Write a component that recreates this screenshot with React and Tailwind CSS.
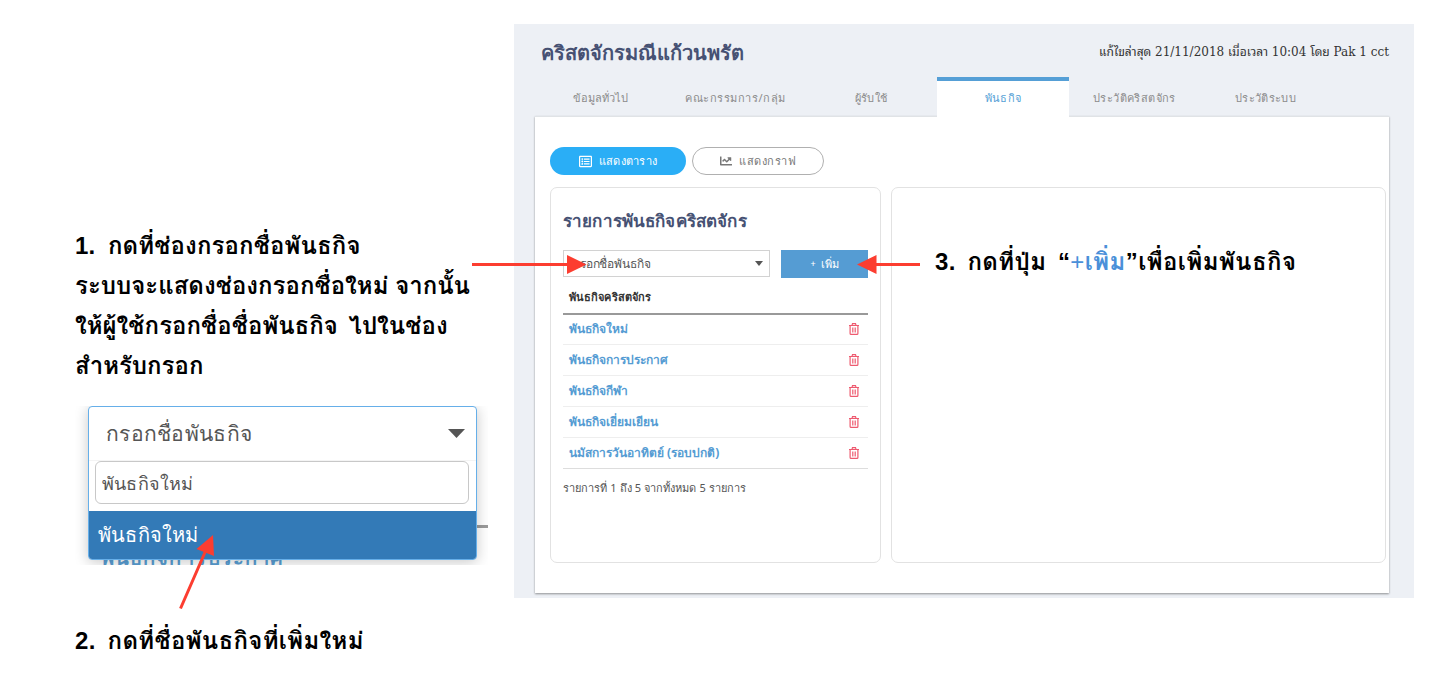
import React from "react";
import { FaRegListAlt, FaChartLine } from "react-icons/fa";

const tabs = [
  { label: "ข้อมูลทั่วไป", cls: "w-[131px] tracking-[0.1px]" },
  { label: "คณะกรรมการ/กลุ่ม", cls: "w-[139px] tracking-[0.5px]" },
  { label: "ผู้รับใช้", cls: "w-[132px] tracking-[0.3px]" },
  { label: "พันธกิจ", active: true, cls: "w-[132px] tracking-[0.4px]" },
  { label: "ประวัติคริสตจักร", cls: "w-[131px] tracking-[0.4px]" },
  { label: "ประวัติระบบ", cls: "w-[131px] tracking-[0.3px]" },
];

const missions = ["พันธกิจใหม่", "พันธกิจการประกาศ", "พันธกิจกีฬา", "พันธกิจเยี่ยมเยียน", "นมัสการวันอาทิตย์ (รอบปกติ)"];

function Caret({ className }) {
  return (
    <svg className={className} viewBox="0 0 16 8" preserveAspectRatio="none" fill="#555">
      <path d="M0 0h16L8 8z" />
    </svg>
  );
}

function Trash() {
  return (
    <svg className="mr-[9px] h-[12px] w-[10px]" viewBox="0 0 10 12" fill="none" stroke="#ee5a6f" strokeWidth="1.2">
      <path d="M0 2.5h10M3 2.4L3.5.7h3L7 2.4M1.1 2.8v7.7q0 .9.9.9h6q.9 0 .9-.9V2.800M3.8 4.500v5M6.200 4.500v5" />
    </svg>
  );
}

function NewMissionDropdown() {
  return (
    <div className="relative ml-[75px] mt-5 h-[159px] w-[413px] overflow-hidden pl-[13px] font-['Noto_Sans',sans-serif] font-normal">
      <div className="absolute inset-x-0 top-[119px] flex h-[3px] justify-end">
        <div className="w-[14px] bg-[#9b9b9b]" />
      </div>
      <div className="absolute left-[26px] top-[139px] text-[20px] font-bold leading-[26px] tracking-[1.1px] text-[#5a9fd4]">
        พันธกิจการประกาศ
      </div>
      <div className="relative h-[154px] w-[389px] rounded-[4px] border-[1.5px] border-[#66afe9] bg-white shadow-[0_2px_14px_rgba(0,0,0,0.22)]">
        <div className="flex h-[54px] items-center justify-between border-b border-[#f4f4f4] pl-[17px] pr-[11px] text-[#555]">
          <span className="text-[21px] leading-none tracking-[0.3px]">กรอกชื่อพันธกิจ</span>
          <Caret className="h-[9px] w-[17px]" />
        </div>
        <div className="ml-[6px] flex h-[43px] w-[374px] items-center rounded-[6px] border-[1.5px] border-[#c8c8c8] pl-[6px] text-[#555]">
          <span className="text-[18px] leading-none tracking-[0.2px]">พันธกิจใหม่</span>
        </div>
        <div className="mt-[7px] flex h-[48px] items-center rounded-b-[3px] bg-[#337ab7] pl-[9px] text-white">
          <span className="text-[20px] font-medium leading-none tracking-[0.2px]">พันธกิจใหม่</span>
        </div>
      </div>
    </div>
  );
}

function Instructions() {
  return (
    <section className="w-[514px] shrink-0 pt-[226px] font-['Liberation_Sans','Loma',sans-serif] text-[24px] font-bold text-black">
      <div className="whitespace-nowrap pl-[75px] leading-[40px]">
        <p className="tracking-[0.1px] [word-spacing:6px]">1. กดที่ช่องกรอกชื่อพันธกิจ</p>
        <p>ระบบจะแสดงช่องกรอกชื่อใหม่ จากนั้น</p>
        <p className="[word-spacing:4px]">ให้ผู้ใช้กรอกชื่อชื่อพันธกิจ ไปในช่อง</p>
        <p>สำหรับกรอก</p>
      </div>
      <NewMissionDropdown />
      <p className="mt-[56px] whitespace-nowrap pl-[75px] leading-[40px] tracking-[0.3px] [word-spacing:5px]">2. กดที่ชื่อพันธกิจที่เพิ่มใหม่</p>
    </section>
  );
}

function Arrows() {
  return (
    <svg className="pointer-events-none absolute left-0 top-0" width="1440" height="691" fill="#fc3d30" stroke="#fc3d30">
      <path d="M472 264.500H570M920 264.500H874M180.500 608.500L206 550" strokeWidth="3" fill="none" />
      <path d="M586.500 264.500L567 255V274zM857 264.500L876.500 255V274zM213 535L196.500 549L214 556z" stroke="none" />
    </svg>
  );
}

export default function App() {
  return (
    <div className="relative flex h-[691px] w-[1440px] overflow-hidden bg-white">
      <Instructions />
      <main className="mt-6 flex h-[574px] w-[900px] flex-col bg-[#edf0f5] pl-[21px] font-['Noto_Sans',sans-serif]">
        <header className="flex h-[53px] w-[854px] items-center justify-between whitespace-nowrap pl-[6px] pt-[4px]">
          <h1 className="text-[20px] font-bold text-[#465173]">คริสตจักรมณีแก้วนพรัต</h1>
          <span className="-mt-px font-['DejaVu_Serif','Noto_Sans_Thai_Looped',serif] text-[12px] text-[#333]">แก้ไขล่าสุด 21/11/2018 เมื่อเวลา 10:04 โดย Pak 1 cct</span>
        </header>
        <nav className="flex h-[39px] text-[11px]">
          {tabs.map((t) => (
            <div key={t.label} className={`flex items-center justify-center whitespace-nowrap ${t.cls} ${t.active ? "relative z-10 h-[40px] border-t-4 border-[#559fd6] bg-white pb-px text-[#559fd6]" : "pt-[4px] text-[#8b8b8b]"}`}>
              {t.label}
            </div>
          ))}
        </nav>
        <div className="h-[477px] w-[854px] border-t border-[#e0e3e6] bg-white pl-[15px] pt-[30px] shadow-[0_1px_2px_rgba(0,0,0,0.4)]">
          <div className="flex gap-[6px] text-[11px] font-medium">
            <button className="flex h-[28px] w-[136px] items-center justify-center gap-[7px] rounded-full bg-[#2aaef6] text-white">
              <FaRegListAlt size={13} /><span className="tracking-[0.3px]">แสดงตาราง</span>
            </button>
            <button className="flex h-[28px] w-[132px] items-center justify-center gap-[7px] rounded-full border border-[#b0b0b0] text-[#777]">
              <FaChartLine size={12} /><span className="tracking-[0.5px]">แสดงกราฟ</span>
            </button>
          </div>
          <div className="mt-[12px] flex gap-[10px]">
            <section className="h-[376px] w-[331px] rounded-[7px] border border-[#e2e2e2] px-3 pt-[18px]">
              <h2 className="text-[17px] font-bold leading-[30px] tracking-[0.15px] text-[#465173]">รายการพันธกิจคริสตจักร</h2>
              <div className="mt-[14px] flex items-start justify-between">
                <div className="flex h-[27px] w-[207px] items-center justify-between border border-[#d2d2d2] pl-[9px] pr-[6px] text-[#555]">
                  <span className="text-[12px] tracking-[-0.15px]">กรอกชื่อพันธกิจ</span>
                  <Caret className="h-[5px] w-[8px]" />
                </div>
                <button className="flex h-[28px] w-[87px] items-center justify-center gap-[5px] bg-[#559cd3] text-[11px] font-medium text-white">
                  <span className="text-[9px]">+</span><span>เพิ่ม</span>
                </button>
              </div>
              <div className="flex h-[36.600px] items-center border-b-2 border-[#999] pl-[6px] pt-[4px] text-[11px] font-bold tracking-[0.1px] text-[#333]">พันธกิจคริสตจักร</div>
              {missions.map((m) => (
                <div key={m} className="flex h-[30.8px] items-center justify-between border-b border-[#eeeeee] pl-[6px] text-[12px] font-bold text-[#559cd3] last-of-type:border-[#ddd]">
                  <span>{m}</span>
                  <Trash />
                </div>
              ))}
              <p className="mt-[9px] text-[11px] leading-[20px] text-[#555] [word-spacing:0.3px]">รายการที่ 1 ถึง 5 จากทั้งหมด 5 รายการ</p>
            </section>
            <section className="h-[376px] w-[495px] rounded-[7px] border border-[#e2e2e2] pl-[43px] pt-[54px]">
              <p className="whitespace-nowrap font-['Liberation_Sans','Loma',sans-serif] text-[24px] font-bold leading-[40px] tracking-[0.4px] text-black [word-spacing:4.5px]">
                3. กดที่ปุ่ม “<span className="text-[#4a90d9]"><span className="font-normal">+</span>เพิ่ม</span>”เพื่อเพิ่มพันธกิจ
              </p>
            </section>
          </div>
        </div>
      </main>
      <Arrows />
    </div>
  );
}
